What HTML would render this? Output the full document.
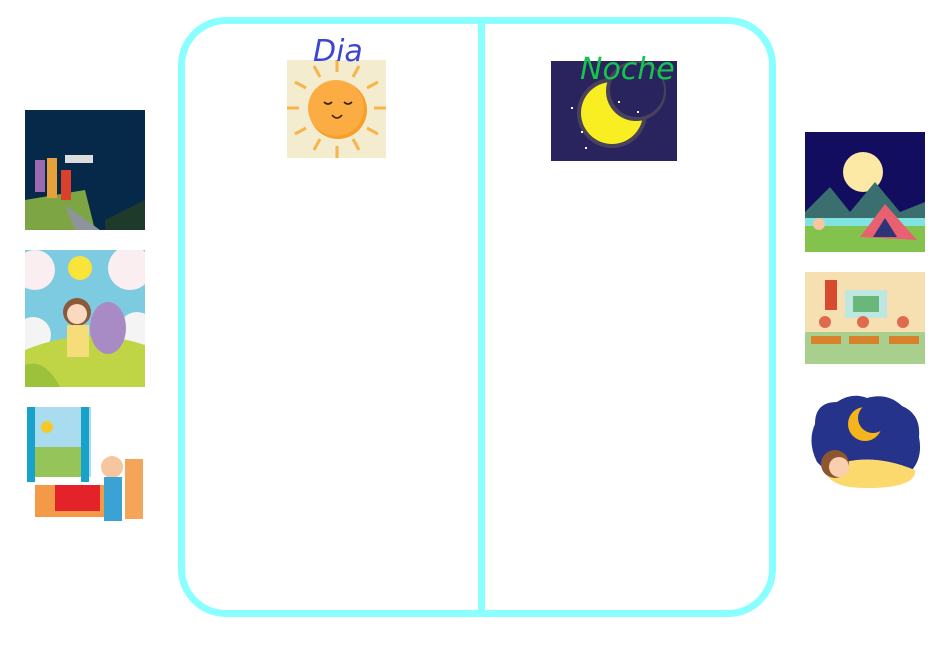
<!DOCTYPE html>
<html><head><meta charset="utf-8"><style>
body{margin:0;width:941px;height:649px;background:#fff;position:relative;overflow:hidden;font-family:"Liberation Sans",sans-serif}
.a{position:absolute}
.frame{left:178px;top:17px;width:584px;height:586px;border:7px solid #8affff;border-radius:48px}
.vl{left:478px;top:17px;width:7px;height:594px;background:#8affff}
.t{font-family:"Comic Sans MS","DejaVu Sans",sans-serif;font-style:italic;font-size:30px}
</style></head><body>
<div class="a frame"></div>
<div class="a vl"></div>

<svg class="a" style="left:287px;top:60px" width="99" height="98">
<rect width="99" height="98" fill="#f4ecce"/>
<g stroke="#f6b54c" stroke-width="3">
<line x1="0" y1="48" x2="12" y2="48"/><line x1="87" y1="48" x2="99" y2="48"/>
<line x1="50" y1="0" x2="50" y2="12"/><line x1="50" y1="86" x2="50" y2="98"/>
<line x1="8" y1="22" x2="19" y2="28"/><line x1="80" y1="68" x2="91" y2="74"/>
<line x1="91" y1="22" x2="80" y2="28"/><line x1="19" y1="68" x2="8" y2="74"/>
<line x1="27" y1="6" x2="33" y2="17"/><line x1="66" y1="79" x2="72" y2="90"/>
<line x1="72" y1="6" x2="66" y2="17"/><line x1="33" y1="79" x2="27" y2="90"/>
</g>
<circle cx="51" cy="50" r="29" fill="#f99e2a"/><circle cx="49" cy="48" r="28" fill="#fbad44"/>
<g fill="none" stroke="#3a220f" stroke-width="1.6"><path d="M37 42q4 4 8 0M57 42q4 4 8 0M45 55q5 6 10 0"/></g>
</svg>
<div class="a t" style="left:313px;top:34px;color:#3d46d4">Dia</div>

<svg class="a" style="left:551px;top:61px" width="126" height="100">
<rect width="126" height="100" fill="#29245e"/>
<circle cx="61" cy="52" r="35" fill="#48435a"/>
<circle cx="61" cy="52" r="31" fill="#f8ee22"/>
<circle cx="85" cy="30" r="30" fill="#48435a"/>
<circle cx="86" cy="29" r="27" fill="#29245e"/>
<g fill="#fff"><rect x="30" y="70" width="2" height="2"/><rect x="34" y="86" width="2" height="2"/><rect x="67" y="40" width="2" height="2"/><rect x="86" y="50" width="2" height="2"/><rect x="20" y="46" width="2" height="2"/></g>
</svg>
<div class="a t" style="left:580px;top:52px;color:#17c24d">Noche</div>

<svg class="a" style="left:25px;top:110px" width="120" height="120">
<rect width="120" height="120" fill="#06294a"/>
<path d="M0 90 L60 80 L70 120 L0 120Z" fill="#7ea544"/>
<path d="M40 95 L75 120 L50 120Z" fill="#8d959a"/>
<path d="M80 110 L120 90 L120 120 L80 120Z" fill="#1d3a2a"/>
<rect x="10" y="50" width="10" height="32" fill="#9c6ab0"/><rect x="22" y="48" width="10" height="40" fill="#e6a13a"/><rect x="36" y="60" width="10" height="30" fill="#d9412c"/>
<rect x="40" y="45" width="28" height="8" fill="#ddd"/>
</svg>

<svg class="a" style="left:25px;top:250px" width="120" height="137">
<rect width="120" height="137" fill="#7ccbe0"/>
<circle cx="10" cy="20" r="20" fill="#fbeef0"/><circle cx="105" cy="18" r="22" fill="#fbeef0"/>
<circle cx="55" cy="18" r="12" fill="#f9e43a"/>
<circle cx="8" cy="85" r="18" fill="#f4f4f4"/><circle cx="112" cy="80" r="18" fill="#f4f4f4"/>
<path d="M0 100 Q60 75 120 95 L120 137 L0 137Z" fill="#bfd546"/>
<path d="M0 115 Q20 108 35 137 L0 137Z" fill="#9bc23a"/>
<ellipse cx="83" cy="78" rx="18" ry="26" fill="#a88bc4"/>
<circle cx="52" cy="62" r="14" fill="#8b5a3c"/><circle cx="52" cy="64" r="10" fill="#fbd8c0"/>
<rect x="42" y="75" width="22" height="32" fill="#f6dd7a"/>
</svg>

<svg class="a" style="left:25px;top:407px" width="120" height="117">
<rect x="2" y="0" width="64" height="70" fill="#a9dcef"/>
<rect x="8" y="40" width="54" height="30" fill="#94c45a"/>
<circle cx="22" cy="20" r="6" fill="#f6c92a"/>
<rect x="2" y="0" width="8" height="75" fill="#18a2c9"/><rect x="56" y="0" width="8" height="75" fill="#18a2c9"/>
<path d="M10 78 L80 78 L80 110 L10 110Z" fill="#f29a48"/><rect x="30" y="78" width="45" height="26" fill="#e4222a"/>
<rect x="100" y="52" width="18" height="60" fill="#f4a55a"/>
<circle cx="87" cy="60" r="11" fill="#f6c6a0"/><rect x="79" y="70" width="18" height="44" fill="#3ba3d4"/>
</svg>

<svg class="a" style="left:805px;top:132px" width="120" height="120">
<rect width="120" height="120" fill="#120d5e"/>
<circle cx="58" cy="40" r="20" fill="#fbe9a5"/>
<path d="M0 80 L25 55 L45 80 L70 50 L95 80 L120 70 L120 90 L0 90Z" fill="#3b6e6e"/>
<rect y="86" width="120" height="10" fill="#7fe3e0"/>
<rect y="94" width="120" height="26" fill="#84c24e"/>
<path d="M55 105 L80 72 L112 108Z" fill="#e96070"/><path d="M68 105 L80 86 L92 105Z" fill="#2e3478"/>
<circle cx="14" cy="92" r="6" fill="#f5c6a0"/>
</svg>

<svg class="a" style="left:805px;top:272px" width="120" height="92">
<rect width="120" height="92" fill="#f6dfb0"/>
<rect x="40" y="18" width="42" height="28" fill="#bfe7e2"/><rect x="48" y="24" width="26" height="16" fill="#6ab77c"/>
<rect x="20" y="8" width="12" height="30" fill="#d84a2f"/>
<rect y="60" width="120" height="32" fill="#a9cf8e"/>
<g fill="#d9822e"><rect x="6" y="64" width="30" height="8"/><rect x="44" y="64" width="30" height="8"/><rect x="84" y="64" width="30" height="8"/></g>
<g fill="#e06a4c"><circle cx="20" cy="50" r="6"/><circle cx="58" cy="50" r="6"/><circle cx="98" cy="50" r="6"/></g>
</svg>

<svg class="a" style="left:807px;top:392px" width="116" height="98">
<path d="M10 70 Q0 50 8 32 Q8 10 30 10 Q45 0 60 6 Q80 0 95 14 Q114 22 112 45 Q116 65 105 78 L20 80Z" fill="#26338a"/>
<circle cx="58" cy="32" r="17" fill="#f6b41c"/><circle cx="66" cy="26" r="15" fill="#26338a"/>
<path d="M20 76 Q60 58 108 78 Q110 96 60 96 Q18 96 20 76Z" fill="#fbd96c"/>
<circle cx="28" cy="72" r="14" fill="#8d5530"/><circle cx="32" cy="75" r="10" fill="#fbcfae"/>
</svg>
</body></html>
